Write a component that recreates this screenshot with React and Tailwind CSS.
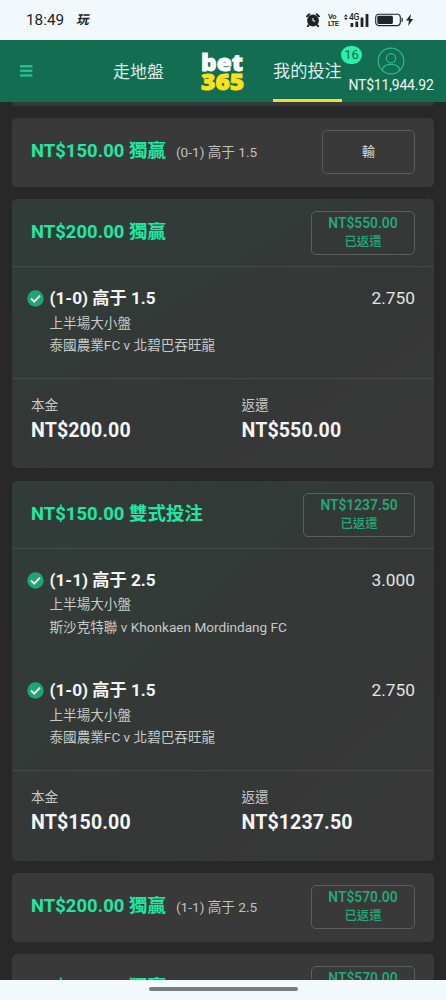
import React from 'react';

const MENU_ROWS = [0, 4.6, 9.2];

function StatusBar() {
  return (
    <div className="flex h-10 shrink-0 items-center justify-between bg-[#f1f9fc] pl-[26px] pr-[32px] text-[#202427]">
      <div className="flex items-center">
        <span className="w-[51px] text-[15.3px] leading-5">18:49</span>
        <span className="-skew-x-12 text-[12.5px] font-bold leading-5">玩</span>
      </div>
      <div className="flex items-center">
        <svg className="mr-[8px]" width="14" height="14" viewBox="0 0 14 14">
          <circle cx="7" cy="7.5" r="5.9" fill="#202427" />
          <path d="M1 3.4 3.3 1.2M13 3.4 10.7 1.2M2.8 12l-1 1.4M11.2 12l1 1.4" stroke="#202427" strokeWidth="1.9" strokeLinecap="round" />
          <path d="M7 5v3h2.2" stroke="#f1f9fc" strokeWidth="1" fill="none" />
        </svg>
        <div className="mr-[6px] flex w-[10px] flex-col text-[7.5px] font-semibold leading-[7px] tracking-[-0.5px]">
          <span>Vo</span>
          <span>LTE</span>
        </div>
        <div className="relative mr-[6px] h-[13px] w-[25px]">
          <svg width="25" height="13" viewBox="0 0 25 13" fill="#202427">
            <path d="M0 2.6 1.9.2l1.9 2.4zM0 3.8h3.8L1.9 6.2z" />
            <rect x="6.5" y="9" width="2.8" height="4" rx=".5" />
            <rect x="11.4" y="7.5" width="2.8" height="5.5" rx=".5" />
            <rect x="16.6" y="3.5" width="2.8" height="9.5" rx=".5" />
            <rect x="21.6" y="0" width="2.8" height="13" rx=".5" />
          </svg>
          <span className="absolute left-[5px] top-[-1px] text-[8.5px] font-medium leading-[8px] tracking-[-0.3px]">4G</span>
        </div>
        <svg width="39" height="14" viewBox="0 0 39 14">
          <rect x=".7" y="1.2" width="24.6" height="11.4" rx="3" fill="none" stroke="#202427" strokeWidth="1.1" />
          <rect x="2.3" y="2.8" width="15.6" height="8.2" rx="1.4" fill="#202427" />
          <path d="M26.7 4.8q1.4 2.1 0 4.2" stroke="#202427" strokeWidth="1.2" fill="none" />
          <path d="M36 1 31 7.6h3L33 13l5.2-7h-3.1z" fill="#202427" />
        </svg>
      </div>
    </div>
  );
}

function Header() {
  return (
    <header className="relative z-10 flex h-[62px] shrink-0 bg-[#136e51] text-[#dcebe5]">
      <svg className="ml-[20px] mt-[25px] shrink-0" width="13" height="13" viewBox="0 0 13 13" fill="#25bd89">
        {MENU_ROWS.map((y) => (
          <rect key={y} x="0" y={y} width="12.4" height="2.5" />
        ))}
      </svg>
      <nav className="ml-[80px] mt-[19px] w-[88px] shrink-0 text-[17px] leading-[26px]">走地盤</nav>
      <div className="mt-[13px] flex w-[72px] shrink-0 flex-col items-start font-['Noto_Sans'] text-[23px] font-black leading-[18.5px]">
        <span className="origin-left scale-x-[1.06] text-white [-webkit-text-stroke:0.9px_#fff]">bet</span>
        <span className="origin-left scale-x-[1.07] text-[#ffe01c] [-webkit-text-stroke:0.9px_#ffe01c]">365</span>
      </div>
      <div className="relative h-[62px] w-[69px] shrink-0 border-b-[3px] border-[#f5dc35] pt-[18px] text-[17.2px] leading-[26px]">
        我的投注
        <span className="absolute left-[68px] top-[6px] flex h-[18px] w-[21px] items-center justify-center rounded-full bg-[#2bf0ac] text-[13px] text-[#12664b]">16</span>
      </div>
      <div className="flex w-[98px] shrink-0 flex-col items-center pt-[7px]">
        <svg className="shrink-0" width="28" height="28" viewBox="0 0 28 28" fill="none" stroke="#2bb98a" strokeWidth="1.2">
          <circle cx="14" cy="14" r="12.8" />
          <circle cx="14" cy="11.2" r="4.6" />
          <path d="M5.2 23.2c.8-4.2 4.1-5.9 8.8-5.9s8 1.7 8.8 5.9" />
        </svg>
        <span className="mt-[1px] whitespace-nowrap text-[14px] leading-[18px] tracking-[-0.2px] text-[#eef6f3]">NT$11,944.92</span>
      </div>
    </header>
  );
}

function ReturnBox({ amount, wide }) {
  return (
    <div className={`${wide ? 'w-[112px]' : 'w-[104px]'} flex h-[44px] flex-col items-center justify-center rounded-[5px] border border-[#59605d] text-[#23a97b]`}>
      <span className="-mt-[1px] text-[13.8px] font-semibold leading-[18px]">{amount}</span>
      <span className="mt-[1px] text-[12.3px] font-medium leading-[18px]">已返還</span>
    </div>
  );
}

function CardHead({ stake, kind, note, children }) {
  return (
    <div className="flex h-[68px] shrink-0 items-center justify-between pl-[19px] pr-[18.5px]">
      <div className="-mt-[2px] flex items-baseline whitespace-nowrap leading-[26px]">
        <span className="text-[18.4px] font-bold tracking-[0.07px] text-[#1de9a3]">{stake} {kind}</span>
        {note && <span className="ml-[10px] text-[13.6px] text-[#c1c1c1]">{note}</span>}
      </div>
      {children}
    </div>
  );
}

function CollapsedCard(props) {
  return (
    <section className="h-[68.5px] shrink-0 rounded-[5px] bg-[#393939]">
      <CardHead {...props} />
    </section>
  );
}

function Leg({ pick, teams, odds }) {
  return (
    <div className="flex h-[110.7px] shrink-0 pl-[14.5px] pr-[18.5px] pt-[18px]">
      <svg className="mr-[6px] mt-[5px] shrink-0" width="17" height="17" viewBox="0 0 17 17">
        <circle cx="8.5" cy="8.5" r="8.2" fill="#20a475" />
        <path d="m4 8.5 3.2 3.2 5.8-6" stroke="#e7f7f1" strokeWidth="1.9" fill="none" />
      </svg>
      <div className="flex-1 text-[13.6px] leading-[22.5px] text-[#c5cac8]">
        <div className="mb-[0.5px] text-[17.2px] font-bold leading-[26px] text-[#f3f5f4]">{pick}</div>
        <div>上半場大小盤</div>
        <div className="whitespace-nowrap">{teams}</div>
      </div>
      <div className="text-[17.3px] leading-[26px] text-[#e2e4e3]">{odds}</div>
    </div>
  );
}

function Amount({ label, value }) {
  return (
    <div className="w-[210.5px] shrink-0">
      <div className="text-[13.6px] leading-[22px] text-[#c5cac8]">{label}</div>
      <div className="mt-[1px] text-[19.6px] font-bold leading-[28px] tracking-[0.1px] text-[#f3f5f4]">{value}</div>
    </div>
  );
}

function BetCard({ stake, kind, returned, wide, legs }) {
  return (
    <section className="flex shrink-0 flex-col rounded-[5px] bg-linear-to-br from-[#313c38] from-10% via-[#353736] via-60% to-[#383838]">
      <CardHead stake={stake} kind={kind}>
        <ReturnBox amount={returned} wide={wide} />
      </CardHead>
      <div className="-mt-[1px] border-y border-[#434b47]">
        {legs.map((leg) => (
          <Leg key={leg.pick} {...leg} />
        ))}
      </div>
      <div className="flex h-[89.5px] pl-[19px] pt-[15px]">
        <Amount label="本金" value={stake} />
        <Amount label="返還" value={returned} />
      </div>
    </section>
  );
}

const overHalf = { pick: '(1-0) 高于 1.5', teams: '泰國農業FC v 北碧巴吞旺龍', odds: '2.750' };

export default function App() {
  return (
    <div className="flex h-[1000px] w-[446px] flex-col overflow-hidden bg-[#282828] font-[Roboto,'Noto_Sans_CJK_TC',sans-serif]">
      <StatusBar />
      <Header />
      <main className="flex min-h-0 flex-1 flex-col gap-[12.5px] overflow-hidden pl-[12px] pr-[12.5px]">
        <div className="h-[3.5px] shrink-0 rounded-b-[5px] bg-[#393939]" />
        <CollapsedCard stake="NT$150.00" kind="獨贏" note="(0-1) 高于 1.5">
          <div className="flex h-[44px] w-[93px] items-center justify-center rounded-[5px] border border-[#5b5b5b] text-[13px] font-medium text-[#c9c9c9]">輸</div>
        </CollapsedCard>
        <BetCard stake="NT$200.00" kind="獨贏" returned="NT$550.00" legs={[overHalf]} />
        <BetCard
          stake="NT$150.00"
          kind="雙式投注"
          returned="NT$1237.50"
          wide
          legs={[{ pick: '(1-1) 高于 2.5', teams: '斯沙克特聯 v Khonkaen Mordindang FC', odds: '3.000' }, overHalf]}
        />
        <CollapsedCard stake="NT$200.00" kind="獨贏" note="(1-1) 高于 2.5">
          <ReturnBox amount="NT$570.00" />
        </CollapsedCard>
        <CollapsedCard stake="NT$200.00" kind="獨贏">
          <ReturnBox amount="NT$570.00" />
        </CollapsedCard>
      </main>
      <footer className="flex h-5 shrink-0 justify-center bg-[#f1f9fc] pt-[7px]">
        <div className="h-[4px] w-[149px] rounded-full bg-[#777c7f]" />
      </footer>
    </div>
  );
}
